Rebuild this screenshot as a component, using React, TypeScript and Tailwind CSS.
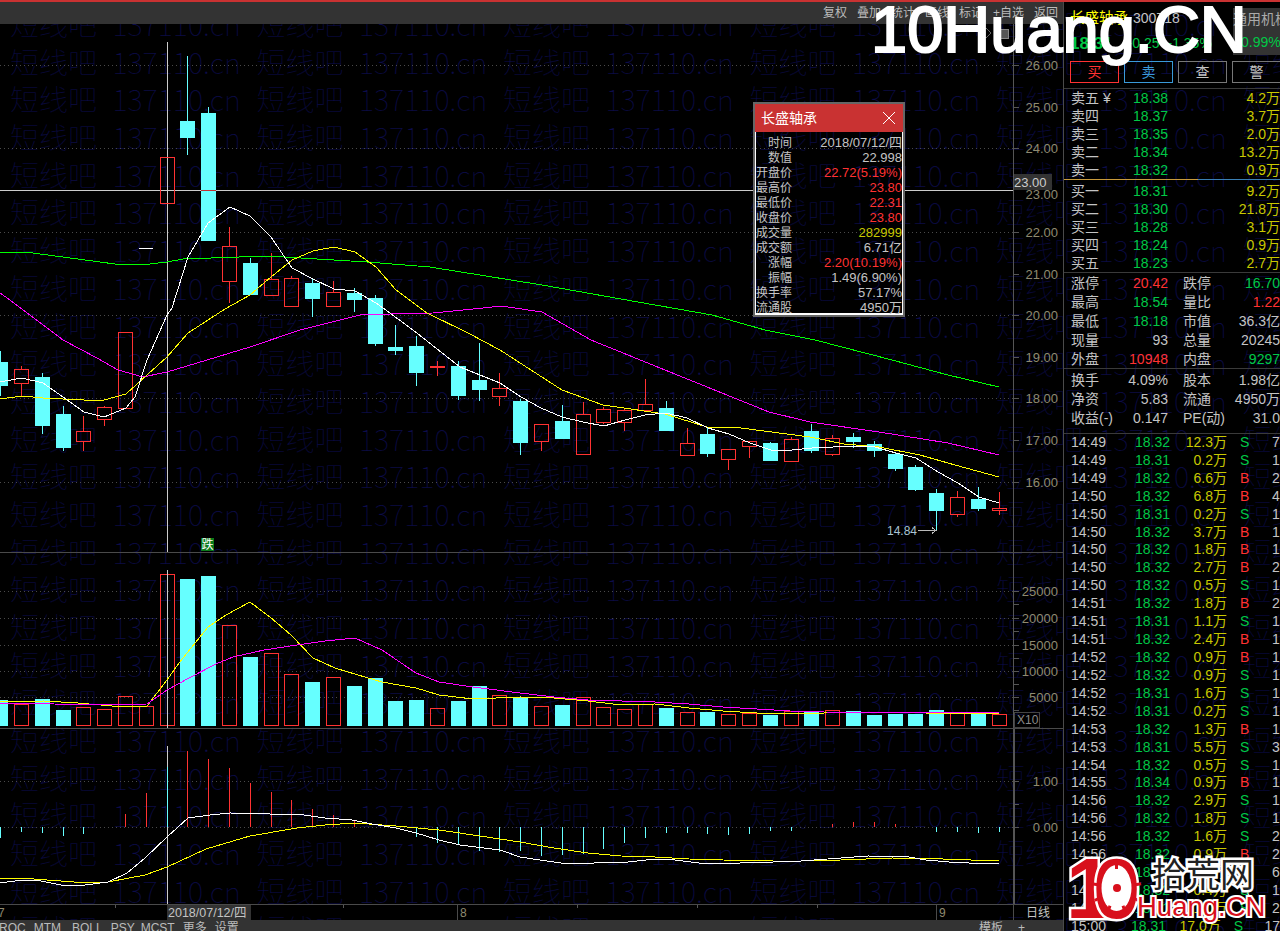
import { Fragment } from 'react';

const FONT = "font-['Liberation_Sans','Noto_Sans_CJK_SC',sans-serif]";
const RED = '#ff3232';
const CYAN = '#66ffff';
const xOf = (k: number) => Math.floor(167 + 20.8 * k + 0.001);

type Candle = [number, 'r' | 'c', number, number, number, number];

// k, colour, high, body top, body bottom, low (page y)
const candles: Candle[] = [
  [-8, 'c', 351, 362, 386, 396], [-7, 'r', 366, 369, 383, 396], [-6, 'c', 373, 377, 426, 434],
  [-5, 'c', 406, 414, 448, 451], [-4, 'r', 416, 431, 441, 451], [-3, 'r', 406, 407, 419, 426],
  [-2, 'r', 332, 332, 408, 408], [0, 'r', 157, 157, 203, 203], [1, 'c', 56, 121, 138, 155],
  [2, 'c', 107, 113, 241, 241], [3, 'r', 227, 246, 281, 303], [4, 'c', 258, 263, 295, 295],
  [5, 'r', 253, 279, 295, 295], [6, 'r', 276, 278, 306, 306], [7, 'c', 279, 283, 299, 317],
  [8, 'r', 281, 292, 306, 306], [9, 'c', 288, 293, 300, 312], [10, 'c', 295, 298, 344, 346],
  [11, 'c', 325, 347, 351, 355], [12, 'c', 336, 346, 373, 386], [13, 'r', 361, 366, 367, 376],
  [14, 'c', 361, 366, 396, 400], [15, 'c', 343, 380, 390, 401], [16, 'r', 373, 388, 396, 406],
  [17, 'c', 399, 401, 443, 455], [18, 'r', 424, 424, 441, 451], [19, 'c', 405, 421, 439, 439],
  [20, 'r', 402, 414, 454, 454], [21, 'r', 407, 409, 422, 424], [22, 'r', 409, 410, 422, 431],
  [23, 'r', 379, 404, 410, 410], [24, 'c', 401, 408, 431, 431], [25, 'r', 428, 443, 455, 455],
  [26, 'c', 428, 434, 454, 457], [27, 'r', 449, 449, 459, 470], [28, 'r', 441, 441, 446, 458],
  [29, 'c', 442, 443, 461, 461], [30, 'r', 437, 439, 461, 461], [31, 'c', 424, 431, 451, 453],
  [32, 'r', 435, 438, 454, 456], [33, 'c', 433, 437, 442, 448], [34, 'c', 441, 444, 451, 457],
  [35, 'c', 452, 454, 469, 471], [36, 'c', 465, 467, 490, 491], [37, 'c', 489, 493, 511, 530],
  [38, 'r', 491, 497, 514, 517], [39, 'c', 487, 499, 509, 511], [40, 'r', 492, 508, 510, 515],
];

const ma5 = '0,382 22,378 43,383 63,397 84,412 104,417 126,408 135,397 147,360 167,315 172,308 188,257 208,223 230,207 250,216 271,237 292,268 313,279 334,289 355,291 376,303 383,308 413,330 460,367 500,383 521,397 541,408 562,417 583,422 604,426 625,420 645,415 666,413 687,418 708,428 729,434 750,443 771,450 792,450 812,448 833,447 854,446 875,447 896,453 916,458 938,472 958,483 979,497 999,503';
const ma10 = '0,399 22,396 43,398 63,399 84,400 104,400 126,394 147,375 167,357 188,333 225,309 250,295 271,277 292,260 313,251 334,247 355,252 376,267 396,290 427,313 468,333 500,350 562,390 603,405 665,414 707,427 741,428 810,437 844,444 879,447 920,455 955,465 999,477';
const ma20 = '0,293 10,300 63,340 97,358 118,370 143,377 167,372 207,360 250,347 300,330 360,315 390,314 433,313 483,308 501,306 542,312 591,340 665,370 769,412 810,422 879,432 948,443 999,455';
const ma60 = '0,252 33,253 115,264 150,264 167,262 183,259 267,256 367,262 430,267 542,285 638,302 712,315 765,330 815,340 892,360 948,375 999,387';

// k, colour, top of the volume bar
const volumes: [number, 'r' | 'c', number][] = [
  [-8, 'c', 700], [-7, 'r', 704], [-6, 'c', 699], [-5, 'c', 710], [-4, 'r', 707], [-3, 'r', 709], [-2, 'r', 696],
  [-1, 'r', 706], [0, 'r', 574], [1, 'c', 579], [2, 'c', 576], [3, 'r', 625], [4, 'c', 657], [5, 'r', 653],
  [6, 'r', 674], [7, 'c', 682], [8, 'r', 677], [9, 'c', 686], [10, 'c', 678], [11, 'c', 701], [12, 'c', 700],
  [13, 'r', 708], [14, 'c', 701], [15, 'c', 686], [16, 'r', 695], [17, 'c', 697], [18, 'r', 706], [19, 'c', 705],
  [20, 'r', 697], [21, 'r', 707], [22, 'r', 709], [23, 'r', 704], [24, 'c', 708], [25, 'r', 712], [26, 'c', 712],
  [27, 'r', 714], [28, 'r', 713], [29, 'c', 715], [30, 'r', 711], [31, 'c', 712], [32, 'r', 710], [33, 'c', 711],
  [34, 'c', 715], [35, 'c', 714], [36, 'c', 714], [37, 'c', 710], [38, 'r', 713], [39, 'c', 714], [40, 'r', 714],
];
const volMaA = '0,702 44,701 78,703 112,706 147,706 167,680 179,663 208,627 226,615 250,602 270,617 291,635 313,658 335,668 358,675 382,682 416,688 439,695 473,699 520,697 554,698 588,701 621,705 655,704 689,708 723,711 757,713 790,713 824,713 858,712 892,712 926,713 959,713 999,713';
const volMaB = '0,703 54,704 101,705 147,704 167,690 189,678 216,664 233,657 264,650 297,645 325,641 355,638 382,650 416,673 439,682 473,687 520,693 554,697 588,700 655,702 689,704 723,707 757,709 790,711 824,712 999,713';

// k, end of the macd stick
const macd: [number, number][] = [
  [-8, 838], [-7, 832], [-6, 833], [-5, 836], [-4, 834], [-2, 814], [-1, 793], [0, 767], [1, 751], [2, 759], [3, 768],
  [4, 783], [5, 792], [6, 800], [7, 809], [8, 815], [9, 820], [11, 828], [12, 837], [13, 843], [14, 845], [15, 851],
  [16, 852], [17, 851], [18, 856], [19, 855], [20, 854], [21, 849], [22, 843], [23, 838], [24, 833], [25, 833],
  [26, 834], [27, 835], [28, 834], [29, 831], [30, 831], [32, 824], [33, 822], [34, 822], [35, 824], [37, 832],
  [38, 832], [39, 833], [40, 832],
];
const dif = '0,883 22,880 41,881 61,885 85,885 108,882 127,873 145,858 167,837 188,818 210,815 230,813 270,814 297,814 325,818 352,820 372,824 396,828 416,833 439,840 460,845 500,850 520,857 540,860 561,863 594,863 628,862 655,859 675,860 699,863 740,863 773,862 801,861 841,858 868,856 909,857 926,860 949,862 969,863 999,864';
const dea = '0,878 34,879 74,882 108,882 145,875 167,867 206,849 250,836 297,828 325,825 355,823 396,826 439,830 480,836 520,842 554,848 588,853 621,856 655,857 689,859 723,860 773,861 807,861 841,860 892,858 943,859 999,861';

const priceLabels: [string, number][] = [
  ['26.00', 65], ['25.00', 107], ['24.00', 148], ['22.00', 232], ['21.00', 274], ['20.00', 315],
  ['19.00', 357], ['18.00', 398], ['17.00', 440], ['16.00', 482],
];
const priceGrid = [65, 148, 232, 315, 398, 482];
const volLabels: [string, number][] = [['25000', 591], ['20000', 618], ['15000', 645], ['10000', 671], ['5000', 697]];

const ask: [string, string, string][] = [
  ['卖五 ¥', '18.38', '4.2万'], ['卖四', '18.37', '3.7万'], ['卖三', '18.35', '2.0万'], ['卖二', '18.34', '13.2万'], ['卖一', '18.32', '0.9万'],
];
const bid: [string, string, string][] = [
  ['买一', '18.31', '9.2万'], ['买二', '18.30', '21.8万'], ['买三', '18.28', '3.1万'], ['买四', '18.24', '0.9万'], ['买五', '18.23', '2.7万'],
];

const G = 'text-[#00c846]';
const R = 'text-[#ff3232]';
const W = 'text-[#c4c4c4]';
const stats: [string, string, string, string, string, string][] = [
  ['涨停', '20.42', R, '跌停', '16.70', G],
  ['最高', '18.54', G, '量比', '1.22', R],
  ['最低', '18.18', G, '市值', '36.3亿', W],
  ['现量', '93', W, '总量', '20245', W],
  ['外盘', '10948', R, '内盘', '9297', G],
];
const stats2: [string, string, string, string, string, string][] = [
  ['换手', '4.09%', W, '股本', '1.98亿', W],
  ['净资', '5.83', W, '流通', '4950万', W],
  ['收益(-)', '0.147', W, 'PE(动)', '31.0', W],
];

const ticks: [string, string, string, string, string][] = [
  ['14:49', '18.32', '12.3万', 'S', '7'], ['14:49', '18.31', '0.2万', 'S', '1'], ['14:49', '18.32', '6.6万', 'B', '2'],
  ['14:50', '18.32', '6.8万', 'B', '4'], ['14:50', '18.31', '0.2万', 'S', '1'], ['14:50', '18.32', '3.7万', 'B', '1'],
  ['14:50', '18.32', '1.8万', 'B', '1'], ['14:50', '18.32', '2.7万', 'B', '2'], ['14:50', '18.32', '0.5万', 'S', '1'],
  ['14:51', '18.32', '1.8万', 'B', '2'], ['14:51', '18.31', '1.1万', 'S', '1'], ['14:51', '18.32', '2.4万', 'B', '1'],
  ['14:52', '18.32', '0.9万', 'B', '1'], ['14:52', '18.32', '0.9万', 'S', '1'], ['14:52', '18.31', '1.6万', 'S', '1'],
  ['14:52', '18.31', '0.2万', 'S', '1'], ['14:53', '18.32', '1.3万', 'B', '1'], ['14:53', '18.31', '5.5万', 'S', '3'],
  ['14:54', '18.32', '0.5万', 'S', '1'], ['14:55', '18.34', '0.9万', 'B', '1'], ['14:56', '18.32', '2.9万', 'S', '1'],
  ['14:56', '18.32', '1.8万', 'S', '1'], ['14:56', '18.32', '1.6万', 'S', '2'], ['14:56', '18.32', '0.9万', 'B', '2'],
  ['14:57', '18.31', '3.1万', 'S', '6'], ['14:57', '18.32', '0.4万', 'S', '1'], ['14:57', '18.31', '1.0万', 'S', '2'],
  ['15:00', '18.31', '17.0万', 'S', '17'],
];

const popupRows: [string, string, string][] = [
  ['时间', '2018/07/12/四', 'text-[#c4c4c4]'], ['数值', '22.998', 'text-[#c4c4c4]'], ['开盘价', '22.72(5.19%)', 'text-[#ff3232]'],
  ['最高价', '23.80', 'text-[#ff3232]'], ['最低价', '22.31', 'text-[#ff3232]'], ['收盘价', '23.80', 'text-[#ff3232]'],
  ['成交量', '282999', 'text-[#c8c800]'], ['成交额', '6.71亿', 'text-[#c4c4c4]'], ['涨幅', '2.20(10.19%)', 'text-[#ff3232]'],
  ['振幅', '1.49(6.90%)', 'text-[#c4c4c4]'], ['换手率', '57.17%', 'text-[#c4c4c4]'], ['流通股', '4950万', 'text-[#c4c4c4]'],
];

function Watermark() {
  return (
    <div className="absolute inset-0 overflow-hidden pl-[10px] pt-[5px] font-['Noto_Sans_CJK_SC',sans-serif] text-[29px] leading-[37.7px] font-thin whitespace-nowrap text-[#0c0c4a] [word-spacing:9px] [-webkit-text-stroke:0.2px_#000]">
      {Array.from({ length: 25 }, (_, r) => (
        <div key={r} className="flex h-[37.7px]">
          {Array.from({ length: 6 }, (_, c) => (
            <span key={c} className="w-[246.5px] shrink-0">短线吧 137110.cn</span>
          ))}
        </div>
      ))}
    </div>
  );
}

function Line({ points, color }: { points: string; color: string }) {
  return <polyline points={points} fill="none" stroke={color} strokeWidth={1} />;
}

function AxisText({ y, children, color = '#8f8a70' }: { y: number; children: string; color?: string }) {
  return (
    <text x={1058} y={y + 5} textAnchor="end" fontSize={13} fill={color}>
      {children}
    </text>
  );
}

function Dotted({ y }: { y: number }) {
  return <line x1={0} x2={1013} y1={y + 0.5} y2={y + 0.5} stroke="#4a4a4a" strokeDasharray="1 3" />;
}

function PricePane() {
  return (
    <svg viewBox="0 24 1063 529" className="block h-[529px] w-[1063px]" shapeRendering="crispEdges">
      {priceGrid.map((y) => <Dotted key={y} y={y} />)}
      <line x1={167.5} x2={167.5} y1={42} y2={552} stroke="#cccccc" />
      <line x1={0} x2={753} y1={190.5} y2={190.5} stroke="#cccccc" />
      <line x1={905} x2={1013} y1={190.5} y2={190.5} stroke="#cccccc" />
      <line x1={139} x2={153} y1={248.5} y2={248.5} stroke="#ffffff" />
      {candles.map(([k, c, hi, top, bot, lo]) => {
        const x = xOf(k) + 0.5;
        const col = c === 'r' ? RED : CYAN;
        return (
          <Fragment key={k}>
            {hi < top && <line x1={x} x2={x} y1={hi} y2={top} stroke={col} />}
            {lo > bot && <line x1={x} x2={x} y1={bot} y2={lo} stroke={col} />}
            {c === 'c' ? (
              <rect x={x - 7.5} y={top} width={15} height={bot - top} fill={CYAN} />
            ) : (
              <rect x={x - 7} y={top + 0.5} width={14} height={bot - top} fill="none" stroke={RED} />
            )}
          </Fragment>
        );
      })}
      <line x1={201} x2={216} y1={190.5} y2={190.5} stroke="#c03030" />
      <Line points={ma60} color="#00ff00" />
      <Line points={ma20} color="#ff00ff" />
      <Line points={ma10} color="#ffff00" />
      <Line points={ma5} color="#ffffff" />
      <text x={887} y={535} fontSize={12} fill="#a9c4d4">14.84</text>
      <path d="M918 530.5H936M932 527.5L936 530.5L932 533.5" fill="none" stroke="#bbbbbb" />
      <rect x={201} y={538} width={13} height={13} fill="#0a7a1a" />
      <text x={201.5} y={549} fontSize={12} fill="#ffffff">跌</text>
      <path d="M986 28L991 33L986 38L981 33Z" fill="none" stroke="#666666" />
      <rect x={999} y={29} width={9} height={9} fill="#555555" stroke="#888888" />
      <line x1={1013.5} x2={1013.5} y1={24} y2={552} stroke="#555555" />
      {priceLabels.map(([t, y]) => (
        <Fragment key={t}>
          <line x1={1013} x2={1019} y1={y + 0.5} y2={y + 0.5} stroke="#555555" />
          <AxisText y={y}>{t}</AxisText>
        </Fragment>
      ))}
      <AxisText y={194}>23.00</AxisText>
      <rect x={1014} y={174} width={38} height={16} fill="#333333" />
      <text x={1014} y={187} fontSize={13} fill="#cccccc">23.00</text>
      <line x1={0} x2={1063} y1={552.5} y2={552.5} stroke="#4a4a4a" />
    </svg>
  );
}

function VolumePane() {
  return (
    <svg viewBox="0 553 1063 176" className="block h-[176px] w-[1063px]" shapeRendering="crispEdges">
      {volLabels.map(([t, y]) => <Dotted key={t} y={y} />)}
      {volumes.map(([k, c, top]) => {
        const x = xOf(k);
        return c === 'c' ? (
          <rect key={k} x={x - 7} y={top} width={15} height={726 - top} fill={CYAN} />
        ) : (
          <rect key={k} x={x - 6.5} y={top + 0.5} width={14} height={726 - top - 1} fill="none" stroke={RED} />
        );
      })}
      <line x1={167.5} x2={167.5} y1={570} y2={728} stroke="#cccccc" />
      <Line points={volMaA} color="#ffff00" />
      <Line points={volMaB} color="#ff00ff" />
      <line x1={1013.5} x2={1013.5} y1={553} y2={728} stroke="#555555" />
      {volLabels.map(([t, y]) => (
        <Fragment key={t}>
          <line x1={1013} x2={1019} y1={y + 0.5} y2={y + 0.5} stroke="#555555" />
          <line x1={1013} x2={1019} y1={y + 13.5} y2={y + 13.5} stroke="#555555" />
          <AxisText y={y}>{t}</AxisText>
        </Fragment>
      ))}
      <rect x={1014.5} y={712.5} width={25} height={15} fill="none" stroke="#444444" />
      <text x={1017} y={724} fontSize={12} fill="#8a8a8a">X10</text>
      <line x1={0} x2={1063} y1={728.5} y2={728.5} stroke="#4a4a4a" />
    </svg>
  );
}

function MacdPane() {
  return (
    <svg viewBox="0 729 1063 176" className="block h-[176px] w-[1063px]" shapeRendering="crispEdges">
      <Dotted y={781} />
      <Dotted y={827} />
      <line x1={167.5} x2={167.5} y1={746} y2={904} stroke="#cccccc" />
      {macd.map(([k, end]) => {
        const x = xOf(k) + 0.5;
        const col = k === 0 || end > 827 ? CYAN : RED;
        return <line key={k} x1={x} x2={x} y1={827} y2={end} stroke={col} />;
      })}
      <Line points={dea} color="#ffff00" />
      <Line points={dif} color="#ffffff" />
      <rect x={1013} y={729} width={2} height={175} fill="#555555" />
      <line x1={1013} x2={1019} y1={781.5} y2={781.5} stroke="#555555" />
      <line x1={1013} x2={1019} y1={804.5} y2={804.5} stroke="#555555" />
      <line x1={1013} x2={1019} y1={827.5} y2={827.5} stroke="#555555" />
      <AxisText y={781}>1.00</AxisText>
      <AxisText y={827}>0.00</AxisText>
      <line x1={0} x2={1063} y1={904.5} y2={904.5} stroke="#4a4a4a" />
    </svg>
  );
}

function DateStrip() {
  return (
    <svg viewBox="0 905 1063 15" className="block h-[15px] w-[1063px]" shapeRendering="crispEdges">
      <text x={-2} y={917} fontSize={12} fill="#8f8a70">7</text>
      <rect x={167} y={905} width={84} height={15} fill="#333333" />
      <text x={168} y={917} fontSize={12.5} fill="#c4c4c4">2018/07/12/四</text>
      {[115, 343, 577, 697, 817].map((x) => (
        <line key={x} x1={x + 0.5} x2={x + 0.5} y1={905} y2={908} stroke="#555555" />
      ))}
      <line x1={457.5} x2={457.5} y1={905} y2={920} stroke="#4a4a4a" />
      <text x={460} y={917} fontSize={12} fill="#8f8a70">8</text>
      <line x1={936.5} x2={936.5} y1={905} y2={920} stroke="#4a4a4a" />
      <text x={939} y={917} fontSize={12} fill="#8f8a70">9</text>
      <line x1={1013.5} x2={1013.5} y1={905} y2={920} stroke="#4a4a4a" />
      <text x={1026} y={917} fontSize={12} fill="#c4c4c4">日线</text>
    </svg>
  );
}

function BookRow({ row }: { row: [string, string, string] }) {
  return (
    <div className="flex h-[18px] items-center pl-[7px]">
      <span className="w-[50px] whitespace-pre text-[#c4c4c4]">{row[0]}</span>
      <span className="w-[47px] text-right text-[#00c846]">{row[1]}</span>
      <span className="flex-1 text-right text-[#c8c800]">{row[2]}</span>
    </div>
  );
}

function StatRow({ row }: { row: [string, string, string, string, string, string] }) {
  return (
    <div className="flex h-[19px] items-center pl-[7px] whitespace-nowrap">
      <span className="w-[50px] text-[#c4c4c4]">{row[0]}</span>
      <span className={`w-[47px] text-right ${row[2]}`}>{row[1]}</span>
      <span className="ml-[15px] w-[45px] text-[#c4c4c4]">{row[3]}</span>
      <span className={`flex-1 text-right ${row[5]}`}>{row[4]}</span>
    </div>
  );
}

function SidePanel() {
  const btn = 'flex h-[22px] w-[49px] shrink-0 items-center justify-center border';
  return (
    <div className="w-[217px] border-l border-[#4a4a4a] text-[14px] leading-none">
      <div className="flex h-[59px] justify-between">
        <div className="pl-[6px] pt-[8px] whitespace-nowrap">
          <div className="flex h-[16px] items-center gap-[5px]">
            <span className="text-[14.5px] text-[#ffff00]">长盛轴承</span>
            <span className="text-[#c4c4c4]">300718</span>
          </div>
          <div className="mt-[9px] flex h-[16px] items-center text-[#00c846]">
            <span className="text-[17px] font-bold">18.31</span>
            <span className="ml-[15px]">-0.25</span>
            <span className="ml-[8px]">-1.35%</span>
          </div>
        </div>
        <div className="mt-[6px] flex h-[47px] w-[47px] flex-col gap-[9px] overflow-hidden bg-[#333333] pt-[4px] whitespace-nowrap">
          <span className="text-[#aaaaaa]">通用机械</span>
          <span className="ml-[8px] text-[#00c846]">0.99%</span>
        </div>
      </div>
      <div className="flex gap-[5px] overflow-hidden pl-[6px]">
        <div className={`${btn} border-[#ff3232] text-[#ff3232]`}>买</div>
        <div className={`${btn} border-[#3a9ad9] text-[#3a9ad9]`}>卖</div>
        <div className={`${btn} border-[#777777] text-[#c4c4c4]`}>查</div>
        <div className={`${btn} border-[#777777] text-[#c4c4c4]`}>警</div>
      </div>
      <div className="mt-[5px] h-px bg-[#3a3a3a]" />
      {ask.map((r) => <BookRow key={r[0]} row={r} />)}
      <div className="flex h-px">
        <div className="w-[134px] bg-[#c89a3c]" />
        <div className="flex-1 bg-[#3a7fb5]" />
      </div>
      <div className="h-[2px]" />
      {bid.map((r) => <BookRow key={r[0]} row={r} />)}
      <div className="h-px bg-[#3a3a3a]" />
      {stats.map((r) => <StatRow key={r[0]} row={r} />)}
      <div className="h-px bg-[#3a3a3a]" />
      <div className="h-px" />
      {stats2.map((r) => <StatRow key={r[0]} row={r} />)}
      <div className="mt-[6px] h-px bg-[#3a3a3a]" />
      <div className="-mt-px">
        {ticks.map((t, i) => (
          <div key={i} className="flex h-[17.93px] items-center pl-[7px] whitespace-nowrap">
            <span className="w-[40px] text-[#c4c4c4]">{t[0]}</span>
            <span className="w-[59px] text-right text-[#00c846]">{t[1]}</span>
            <span className="w-[57px] text-right text-[#c8c800]">{t[2]}</span>
            <span className={`ml-[13px] w-[32px] ${t[3] === 'S' ? 'text-[#00c846]' : 'text-[#ff3232]'}`}>{t[3]}</span>
            <span className="text-[#c4c4c4]">{t[4]}</span>
          </div>
        ))}
      </div>
    </div>
  );
}

function InfoPopup() {
  return (
    <div className="absolute top-[102px] left-[753px] w-[152px] border-2 border-[#666666]">
      <div className="flex h-[28px] items-center justify-between bg-[#c93232] pr-[7px] pl-[6px] text-[14px] text-white">
        <span>长盛轴承</span>
        <svg width="14" height="14" viewBox="0 0 14 14" fill="none" stroke="#ffffff" strokeWidth="1">
          <path d="M1 1L13 13M13 1L1 13" />
        </svg>
      </div>
      <div className="h-[183px] border-x border-b-2 border-white pt-[3px]">
        {popupRows.map(([label, value, cls]) => (
          <div key={label} className="flex h-[15px] items-center whitespace-nowrap">
            <span className="w-[36px] text-right text-[12px] text-[#c4c4c4]">{label}</span>
            <span className={`flex-1 text-right text-[13px] ${cls}`}>{value}</span>
          </div>
        ))}
      </div>
    </div>
  );
}

function SiteLogo() {
  const red = '#d8101c';
  const notch = [0, 40, 80, 120, 160, 200, 240, 280, 320];
  return (
    <svg
      viewBox="1060 850 220 81"
      className="absolute top-[850px] left-[1060px] h-[81px] w-[220px]"
      fontFamily="'Liberation Sans','Noto Sans CJK SC',sans-serif"
    >
      <text x={1066} y={918} fontSize={85} fontWeight={700} fill={red} stroke="#ffffff" strokeWidth={5} paintOrder="stroke">1</text>
      <text x={1093} y={918} fontSize={85} fontWeight={700} fill={red} stroke="#ffffff" strokeWidth={5} paintOrder="stroke">0</text>
      <ellipse cx={1116.5} cy={888} rx={15} ry={23} fill="#ffffff" />
      {notch.map((a) => (
        <rect key={a} x={1115} y={863} width={3} height={6} fill={red} transform={`rotate(${a} 1116.5 888)`} />
      ))}
      <circle cx={1117} cy={888} r={4} fill={red} />
      <text x={1152} y={887} fontSize={34} fill="#222222" stroke="#ffffff" strokeWidth={5} paintOrder="stroke">拾荒网</text>
      <text x={1137} y={916} fontSize={27.5} fill={red} stroke="#ffffff" strokeWidth={4} paintOrder="stroke">Huang.CN</text>
    </svg>
  );
}

export default function App() {
  return (
    <div className={`relative h-[931px] w-[1280px] overflow-hidden bg-black ${FONT}`}>
      <Watermark />
      <div className="relative flex h-full flex-col">
        <div className="h-[2px] shrink-0 bg-[#c93232]" />
        <div className="flex min-h-0 flex-1">
          <div className="flex w-[1063px] shrink-0 flex-col">
            <div className="flex h-[22px] shrink-0 items-center justify-end gap-[10px] bg-[#333333] pr-[5px] text-[12px] text-[#bbbbbb]">
              <span>复权</span>
              <span>叠加</span>
              <span>统计</span>
              <span>画线</span>
              <span>标记</span>
              <span>+自选</span>
              <span>返回</span>
            </div>
            <PricePane />
            <VolumePane />
            <MacdPane />
            <DateStrip />
            <div className="flex h-[11px] shrink-0 gap-[8px] overflow-hidden bg-[#333333] pt-[1px] pr-[38px] text-[12px] leading-[14px] text-[#bbbbbb]">
              <span className="-ml-px">ROC</span>
              <span>MTM</span>
              <span className="ml-[3px]">BOLL</span>
              <span>PSY</span>
              <span className="-ml-[2px]">MCST</span>
              <span>更多</span>
              <span>设置</span>
              <span className="ml-auto">模板</span>
              <span className="ml-[7px]">+</span>
            </div>
          </div>
          <SidePanel />
        </div>
      </div>
      <InfoPopup />
      <SiteLogo />
      <div className="absolute top-[-7px] left-[871px] text-[65px] leading-[74px] whitespace-nowrap text-white [-webkit-text-stroke:2px_#fff]">
        10Huang.CN
      </div>
    </div>
  );
}
